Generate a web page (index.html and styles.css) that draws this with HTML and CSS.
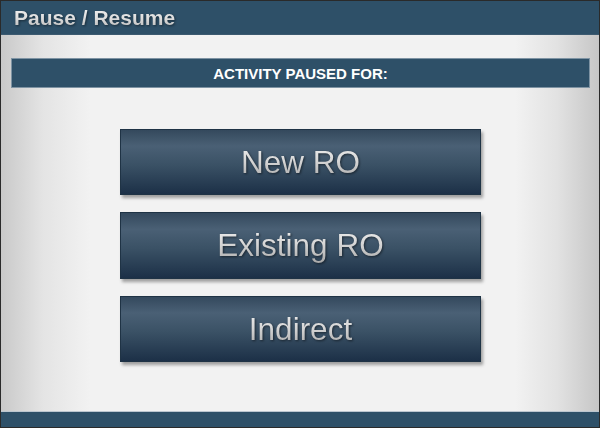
FILE: index.html
```html
<!DOCTYPE html>
<html lang="en">
<head>
    <meta charset="UTF-8">
    <meta name="viewport" content="width=device-width, initial-scale=1.0">
    <title>Pause / Resume</title>
    <link rel="stylesheet" href="styles.css">
</head>
<body>
    <div class="screen">
        <header class="title-bar">
            <h1>Pause / Resume</h1>
        </header>

        <div class="banner">ACTIVITY PAUSED FOR:</div>

        <!-- Pause reasons -->
        <div class="choices">
            <button type="button" class="choice"><span>New RO</span></button>
            <button type="button" class="choice tall"><span>Existing RO</span></button>
            <button type="button" class="choice"><span>Indirect</span></button>
        </div>

        <footer class="bottom-bar"></footer>
    </div>
</body>
</html>
```

FILE: styles.css
```css
html, body {
    margin: 0;
    padding: 0;
}
body {
    font-family: "Liberation Sans", Arial, sans-serif;
    width: 600px;
    height: 428px;
}
.screen {
    box-sizing: border-box;
    width: 600px;
    height: 428px;
    border: 1px solid #2a2a2a;
    display: flex;
    flex-direction: column;
    background: linear-gradient(to right, #c9c9c9 0%, #e4e4e4 7%, #f2f2f2 15%, #f2f2f2 86%, #e2e2e2 93%, #c6c6c6 100%);
}
.title-bar {
    height: 34px;
    background-color: #2e5068;
    border-bottom: 1px solid #3c5a70;
    box-sizing: border-box;
    display: flex;
    align-items: center;
    padding-left: 13px;
}
.title-bar h1 {
    margin: 0;
    font-size: 21px;
    font-weight: bold;
    background: linear-gradient(to bottom, #f4f4f4 0%, #dedede 50%, #b4b4b4 100%);
    -webkit-background-clip: text;
    background-clip: text;
    color: transparent;
    filter: drop-shadow(1px 1px 1px rgba(0, 0, 0, 0.45));
}
.banner {
    margin: 23px 9px 0 10px;
    height: 30px;
    box-sizing: border-box;
    background-color: #2e5068;
    border: 1px solid #7e93a3;
    color: #ffffff;
    font-size: 15px;
    font-weight: bold;
    display: flex;
    align-items: center;
    justify-content: center;
}
.choices {
    display: flex;
    flex-direction: column;
    align-items: flex-start;
    gap: 17px;
    margin-top: 41px;
    padding-left: 119px;
}
.choice {
    width: 361px;
    height: 66px;
    border: 1px solid #1f3345;
    background: linear-gradient(to bottom, #34495d 0%, #4a6075 25%, #3a5165 55%, #1c3047 100%);
    box-shadow: 2px 3px 3px rgba(0, 0, 0, 0.35);
    font-family: "Liberation Sans", Arial, sans-serif;
    font-size: 31.5px;
    padding: 0;
    cursor: pointer;
}
.choice.tall {
    height: 67px;
}
.choice span {
    background: linear-gradient(to bottom, #f0f0f0 0%, #d4d4d4 50%, #a8a8a8 100%);
    -webkit-background-clip: text;
    background-clip: text;
    color: transparent;
    filter: drop-shadow(1px 1px 1px rgba(0, 0, 0, 0.5));
}
.bottom-bar {
    margin-top: auto;
    height: 16px;
    box-sizing: border-box;
    background-color: #2e5068;
    border-top: 1px solid #bcc6cf;
}
```
